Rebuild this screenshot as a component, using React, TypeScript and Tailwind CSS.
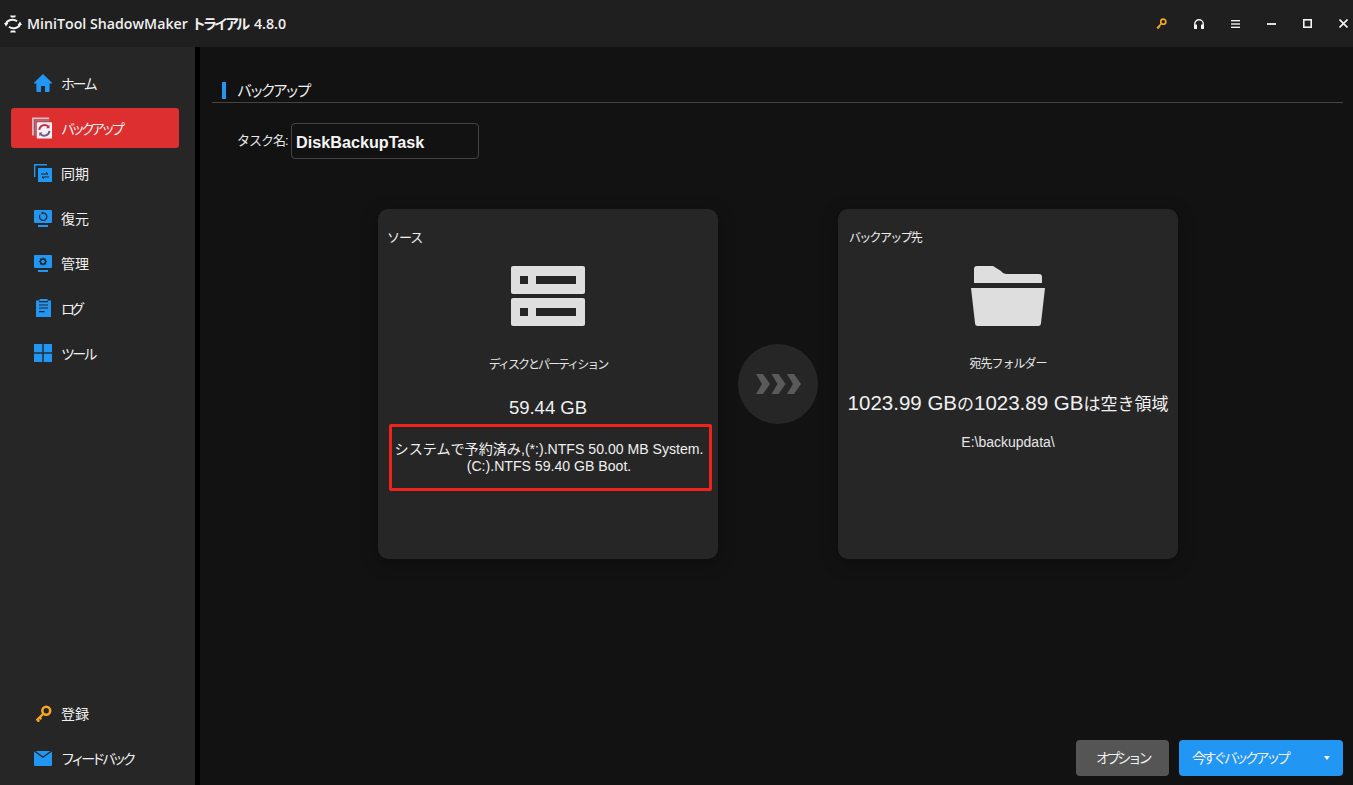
import React from 'react';

const jp = "font-['Liberation_Sans','Noto_Sans_CJK_JP',sans-serif]";

const HomeIcon = () => (
  <svg width="18" height="18" viewBox="0 0 18 18" fill="#2196f3">
    <path d="M9 0 L18 8.8 L18 9.6 L15.6 9.6 L15.6 17 A1 1 0 0 1 14.6 18 L11 18 L11 12 L7 12 L7 18 L3.4 18 A1 1 0 0 1 2.4 17 L2.4 9.6 L0 9.6 L0 8.8 Z" />
  </svg>
);

const BackupIcon = () => (
  <svg width="21" height="22" viewBox="0 0 21 22" fill="none" className="-ml-[2px]">
    <path d="M1 19 V1 H18" stroke="#c9c6d6" strokeWidth="1.8" />
    <path d="M3.4 19 V3.4 H18" stroke="#8f8aa0" strokeWidth="1" />
    <rect x="5" y="5" width="16" height="17" rx="0.5" fill="#f6f2f4" />
    <path d="M7.6 13 A5.6 5.6 0 0 1 17 9.5" stroke="#c0304a" strokeWidth="2" />
    <path d="M18.4 14 A5.6 5.6 0 0 1 9 17.5" stroke="#6d5a86" strokeWidth="2" />
    <path d="M18.4 7.4 V11.2 H14.8 Z" fill="#c0304a" />
    <path d="M7.6 19.6 V15.8 H11.2 Z" fill="#6d5a86" />
  </svg>
);

const SyncIcon = () => (
  <svg width="18" height="18" viewBox="0 0 18 18" fill="none">
    <path d="M0.7 13 V0.7 H13" stroke="#2196f3" strokeWidth="1.4" />
    <rect x="4" y="4" width="14" height="14" fill="#2196f3" />
    <path d="M7 10 H14 L12 8.4 M15 13 H8 L10 14.6" stroke="#262626" strokeWidth="1" />
  </svg>
);

const RestoreIcon = () => (
  <svg width="18" height="17" viewBox="0 0 18 17" fill="none">
    <rect width="18" height="13" rx="1" fill="#2196f3" />
    <rect x="4" y="15" width="10" height="2" fill="#2196f3" />
    <path d="M6.2 4.5 A3.7 3.7 0 1 0 9 3" stroke="#262626" strokeWidth="1.2" />
    <path d="M9.4 1.4 L6.8 3 L9.4 4.6 Z" fill="#262626" />
  </svg>
);

const ManageIcon = () => (
  <svg width="18" height="17" viewBox="0 0 18 17" fill="none">
    <rect width="18" height="13" rx="1" fill="#2196f3" />
    <rect x="4" y="15" width="10" height="2" fill="#2196f3" />
    <circle cx="9" cy="6.5" r="2.6" stroke="#262626" strokeWidth="1.5" />
    <path d="M9 2.4 V3.6 M9 9.4 V10.6 M5 6.5 H6.2 M11.8 6.5 H13 M6.2 3.7 L7 4.5 M11 8.5 L11.8 9.3 M11.8 3.7 L11 4.5 M7 8.5 L6.2 9.3" stroke="#262626" strokeWidth="1.2" />
  </svg>
);

const LogIcon = () => (
  <svg width="15" height="18" viewBox="0 0 15 18" fill="none">
    <path d="M0 1.5 H3.5 V0 H11.5 V1.5 H15 V18 H0 Z" fill="#2196f3" />
    <path d="M3 2.6 H12 M3 6 H12 M3 9 H12 M3 12.6 H8.5" stroke="#262626" strokeWidth="1.1" />
  </svg>
);

const ToolIcon = () => (
  <svg width="18" height="18" viewBox="0 0 18 18" fill="#2196f3">
    <rect width="8.3" height="8.3" />
    <rect x="9.7" width="8.3" height="8.3" />
    <rect y="9.7" width="8.3" height="8.3" />
    <rect x="9.7" y="9.7" width="8.3" height="8.3" />
  </svg>
);

const KeyIcon = ({ size }: { size: number }) => (
  <svg width={size} height={size} viewBox="0 0 16 16" fill="none">
    <circle cx="10.6" cy="5.4" r="3.7" stroke="#f5a623" strokeWidth="2.4" />
    <path d="M8 8 L1.5 14.5 M2 14 L4 15.6 M4.2 11.8 L6 13.4" stroke="#f5a623" strokeWidth="2.2" />
  </svg>
);

const MailIcon = () => (
  <svg width="18" height="15" viewBox="0 0 18 15" fill="#2196f3">
    <path d="M0 0.4 L9 7 L18 0.4 V14 A1 1 0 0 1 17 15 H1 A1 1 0 0 1 0 14 Z" />
    <path d="M1.6 0 H16.4 L9 5.4 Z" />
  </svg>
);

const AppLogo = () => (
  <svg width="18" height="18" viewBox="0 0 18 18" fill="none">
    <path d="M6 0.6 H12 L11 2.6 H7 Z M6 17.4 H12 L11 15.4 H7 Z" fill="#f4f4f4" />
    <path d="M2 9 A6.5 5 0 0 1 13 6.2" stroke="#f4f4f4" strokeWidth="2" />
    <path d="M16 9 A6.5 5 0 0 1 5 11.8" stroke="#f4f4f4" strokeWidth="2" />
    <path d="M0 8 L4.4 8 L2 11.4 Z M18 10 L13.6 10 L16 6.6 Z" fill="#f4f4f4" />
  </svg>
);

const HeadsetIcon = () => (
  <svg width="10" height="10" viewBox="0 0 10 10" fill="none">
    <path d="M0.8 7 V4.6 A4.2 3.8 0 0 1 9.2 4.6 V7" stroke="#f4f4f4" strokeWidth="1.4" />
    <rect x="0" y="5.4" width="3" height="4.6" rx="0.6" fill="#f4f4f4" />
    <rect x="7" y="5.4" width="3" height="4.6" rx="0.6" fill="#f4f4f4" />
  </svg>
);

const MenuIcon = () => (
  <svg width="9" height="8" viewBox="0 0 9 8" fill="#f4f4f4">
    <rect width="9" height="1.4" />
    <rect y="3.3" width="9" height="1.4" />
    <rect y="6.6" width="9" height="1.4" />
  </svg>
);

const MinIcon = () => (
  <svg width="9" height="2" viewBox="0 0 9 2" fill="#dcdcdc">
    <rect width="9" height="2" />
  </svg>
);

const MaxIcon = () => (
  <svg width="9" height="9" viewBox="0 0 9 9" fill="none">
    <rect x="0.8" y="0.8" width="7.4" height="7.4" stroke="#f4f4f4" strokeWidth="1.6" />
  </svg>
);

const CloseIcon = () => (
  <svg width="9" height="9" viewBox="0 0 9 9" fill="none">
    <path d="M0.5 0.5 L8.5 8.5 M8.5 0.5 L0.5 8.5" stroke="#f4f4f4" strokeWidth="1.6" />
  </svg>
);

const DiskIcon = () => (
  <svg width="74" height="60" viewBox="0 0 74 60" fill="#dedede">
    <path fillRule="evenodd" d="M2 0 H72 A2 2 0 0 1 74 2 V26 A2 2 0 0 1 72 28 H2 A2 2 0 0 1 0 26 V2 A2 2 0 0 1 2 0 Z M9 10 V18 H17 V10 Z M25 10 V18 H65 V10 Z" />
    <path fillRule="evenodd" d="M2 32 H72 A2 2 0 0 1 74 34 V58 A2 2 0 0 1 72 60 H2 A2 2 0 0 1 0 58 V34 A2 2 0 0 1 2 32 Z M9 42 V50 H17 V42 Z M25 42 V50 H65 V42 Z" />
  </svg>
);

const FolderIcon = () => (
  <svg width="74" height="60" viewBox="0 0 74 60" fill="#dedede">
    <path d="M3 17 V3 A3 3 0 0 1 6 0 H22 L30 5 Q32 8 36 8 H68 A3 3 0 0 1 71 11 V17 Z" />
    <path d="M0 22 H74 L70 57 A3 3 0 0 1 67 60 H7 A3 3 0 0 1 4 57 Z" />
  </svg>
);

const ArrowsIcon = () => (
  <svg width="45" height="20" viewBox="0 0 45 20" fill="#5a5a5a">
    <path d="M0 0 H7 L14 10 L7 20 H0 L6 10 Z" />
    <path d="M15.5 0 H22.5 L29.5 10 L22.5 20 H15.5 L21.5 10 Z" />
    <path d="M31 0 H38 L45 10 L38 20 H31 L37 10 Z" />
  </svg>
);

const NavItem = ({ icon, label, active, tracking = '' }: { icon: React.ReactNode; label: string; active?: boolean; tracking?: string }) => (
  <div className={`ml-[11px] flex h-10 w-[168px] items-center rounded-[3px] ${active ? 'bg-[#dd2f30]' : ''}`}>
    <div className="flex w-[50px] shrink-0 justify-end pr-[9px]">
      <div className="flex w-[18px] justify-center">{icon}</div>
    </div>
    <span className={`whitespace-nowrap pt-[2px] text-[14px] text-[#f0f0f0] ${tracking}`}>{label}</span>
  </div>
);

export default function App() {
  return (
    <div className={`flex h-[785px] w-[1353px] flex-col overflow-hidden bg-[#121212] ${jp}`}>
      {/* Title bar */}
      <header className="flex h-[47px] shrink-0 items-center bg-[#1f1f1f] pl-1 pr-[5px]">
        <AppLogo />
        <span className="ml-[5px] whitespace-nowrap font-['Open_Sans','Noto_Sans_CJK_JP',sans-serif] text-[14.2px] font-semibold text-[#f0f0f0]">
          MiniTool ShadowMaker <span className="mr-[3px] tracking-[-3px]">トライアル</span> 4.8.0
        </span>
        <div className="ml-auto flex items-center gap-[27px]">
          <KeyIcon size={11} />
          <HeadsetIcon />
          <MenuIcon />
          <MinIcon />
          <MaxIcon />
          <CloseIcon />
        </div>
      </header>

      <div className="flex min-h-0 flex-1">
        {/* Sidebar */}
        <aside className="flex w-[195px] shrink-0 flex-col justify-between bg-[#262626] pb-[7px] pt-4">
          <nav className="flex flex-col gap-[5px]">
            <NavItem icon={<HomeIcon />} label="ホーム" tracking="tracking-[-2.4px]" />
            <NavItem icon={<BackupIcon />} label="バックアップ" active tracking="tracking-[-4px]" />
            <NavItem icon={<SyncIcon />} label="同期" />
            <NavItem icon={<RestoreIcon />} label="復元" />
            <NavItem icon={<ManageIcon />} label="管理" />
            <NavItem icon={<LogIcon />} label="ログ" tracking="tracking-[-4px]" />
            <NavItem icon={<ToolIcon />} label="ツール" tracking="tracking-[-2.8px]" />
          </nav>
          <div className="flex flex-col gap-[5px]">
            <NavItem icon={<KeyIcon size={17} />} label="登録" />
            <NavItem icon={<MailIcon />} label="フィードバック" tracking="tracking-[-3.7px]" />
          </div>
        </aside>
        <div className="w-[5px] shrink-0 bg-black" />

        {/* Main */}
        <main className="flex min-w-0 flex-1 flex-col pl-3 pr-[10px]">
          <div className="mt-[33px] flex h-[23px] items-start border-b border-[#444444] pl-[10px]">
            <div className="mt-[2px] h-[17px] w-1 bg-[#2196f3]" />
            <span className="ml-[11px] pt-[1px] text-[15px] leading-[19px] tracking-[-3.1px] text-[#f0f0f0]">バックアップ</span>
          </div>

          <div className="ml-[25px] mt-[20px] flex items-center">
            <span className="w-[54px] whitespace-nowrap text-[13px] tracking-[-1px] text-[#e6e6e6]">タスク名:</span>
            <div className="flex h-9 w-[188px] items-center rounded-[4px] border border-[#444444] pl-1 pt-[2px] text-[16.2px] font-bold text-[#f5f5f5]">
              DiskBackupTask
            </div>
          </div>

          <div className="ml-[166px] mt-[50px] flex items-center gap-5">
            {/* Source card */}
            <section className="flex h-[350px] w-[340px] flex-col items-center rounded-[10px] bg-[#262626] shadow-[0_4px_18px_rgba(0,0,0,0.3)]">
              <div className="mt-[20px] w-full pl-[9px] text-[13px] leading-[18px] tracking-[-1px] text-[#f0f0f0]">ソース</div>
              <div className="mt-[19px]"><DiskIcon /></div>
              <div className="mt-[30px] whitespace-nowrap text-[12px] leading-[18px] tracking-[-2px] text-[#e6e6e6]">ディスクとパーティション</div>
              <div className="mt-[23px] text-[18.5px] leading-[22px] text-[#f0f0f0]">59.44 GB</div>
              <div className="ml-[5px] mt-[5px] flex h-[67px] w-[323px] flex-col justify-center rounded-[2px] border-[3px] border-[#f0231c] pr-[3px] text-center text-[14.1px] leading-[17px] text-[#f0f0f0]">
                <div className="whitespace-nowrap">システムで予約済み,(*:).NTFS 50.00 MB System.</div>
                <div>(C:).NTFS 59.40 GB Boot.</div>
              </div>
            </section>

            <div className="flex h-20 w-20 shrink-0 items-center justify-center rounded-full bg-[#262626]">
              <ArrowsIcon />
            </div>

            {/* Destination card */}
            <section className="flex h-[350px] w-[340px] flex-col items-center rounded-[10px] bg-[#262626] shadow-[0_4px_18px_rgba(0,0,0,0.3)]">
              <div className="mt-[20px] w-full pl-[11px] text-[12px] leading-[18px] tracking-[-1.7px] text-[#f0f0f0]">バックアップ先</div>
              <div className="mt-[19px]"><FolderIcon /></div>
              <div className="mt-[29px] text-[12px] leading-[18px] tracking-[-1px] text-[#e6e6e6]">宛先フォルダー</div>
              <div className="mt-[18px] whitespace-nowrap text-[20.5px] leading-[24px] text-[#f0f0f0]">
                1023.99 GB<span className="text-[17px]">の</span>1023.89 GB<span className="text-[17px]">は空き領域</span>
              </div>
              <div className="mt-[17px] text-[14px] leading-[16px] text-[#e6e6e6]">E:\backupdata\</div>
            </section>
          </div>

          <div className="mb-[9px] mt-auto flex justify-end gap-[10px]">
            <button className="h-9 w-[93px] rounded-[4px] bg-[#555555] text-[14px] tracking-[-3.4px] text-[#f0f0f0]">オプション</button>
            <button className="flex h-9 w-[164px] items-center justify-between rounded-[4px] bg-[#2196f3] pl-[13px] pr-[13px] text-[#f0f0f0]">
              <span className="whitespace-nowrap text-[14px] tracking-[-3.4px]">今すぐバックアップ</span>
              <span className="h-0 w-0 border-x-[3px] border-t-[4px] border-x-transparent border-t-white" />
            </button>
          </div>
        </main>
      </div>
    </div>
  );
}
